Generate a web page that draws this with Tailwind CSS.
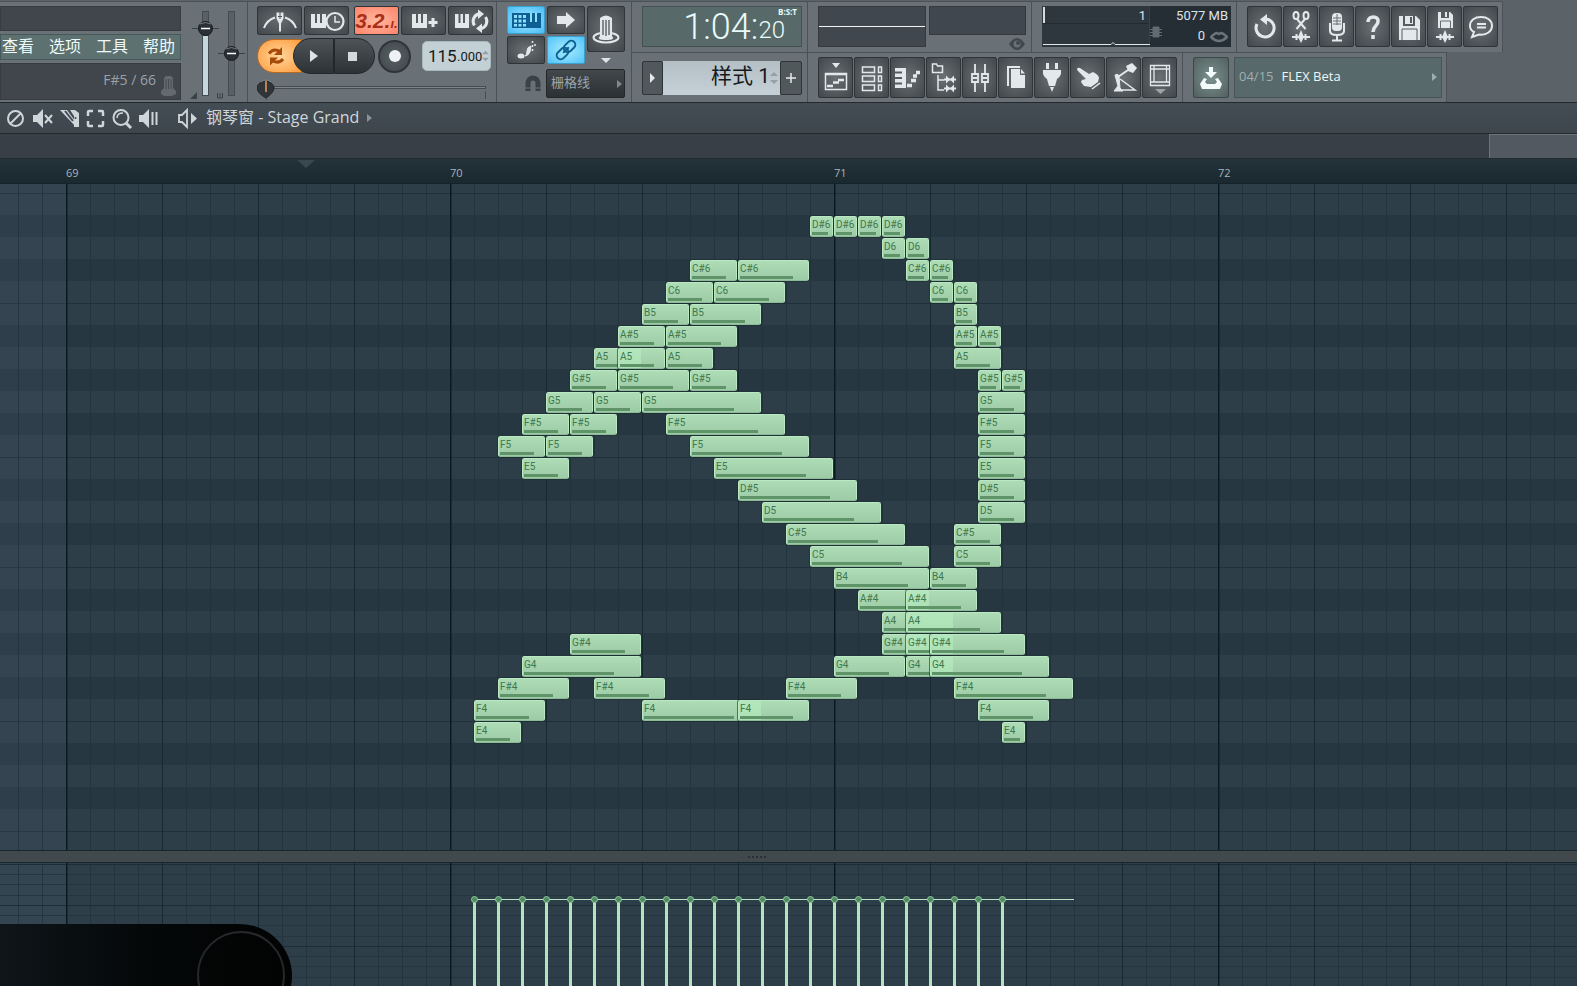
<!DOCTYPE html>
<html lang="zh-CN">
<head>
<meta charset="utf-8">
<title>钢琴窗 - Stage Grand</title>
<script src="https://cdn.jsdelivr.net/npm/@tailwindcss/browser@4"></script>
</head>
<body class="flex h-screen flex-col overflow-hidden bg-[#2d3e49] font-['Open_Sans','Noto_Sans_CJK_SC',sans-serif] text-[#dfe6e9]">

<header class="flex h-[103px] shrink-0 border-b border-[#23292e] bg-[#5b6268] pt-px [&_button]:shrink-0">

  <!-- menu and hint -->
  <section class="flex w-[248px] shrink-0 border-t border-r border-[#4a5157] bg-[#697177]">
    <div class="flex w-[181px] flex-col gap-[3px] pt-1">
      <div class="h-[25px] border border-[#363c42] bg-[#40464c]"></div>
      <nav class="flex h-[26px] items-center gap-[15px] border border-[#46595a] bg-[#5c7170] pb-[3px] pl-px text-[16px] leading-5 whitespace-nowrap text-[#eefafa]">
        <a href="#">查看</a><a href="#">选项</a><a href="#">工具</a><a href="#">帮助</a>
      </nav>
      <div class="flex h-[37px] items-center justify-end gap-1 border border-[#363c42] bg-[#40464c] pr-[3px] text-[14px] text-[#9ba2a7]">
        <span class="pb-1">F#5 / 66</span>
        <svg class="mt-2 h-5 w-[17px]" viewBox="0 0 17 20" fill="#62696f"><path d="M4 2l2-2h5l2 2v10l3 3v3l-4 2H4l-3-2v-3l3-3z"/><path d="M6 3v10M8.500 3v10M11 3v10" stroke="#444b51" fill="none"/></svg>
      </div>
    </div>
    <div class="relative flex flex-1">
      <svg class="h-[99px] w-[66px]" viewBox="181 2 66 99">
        <g fill="#596066" stroke="#444b51"><rect x="202.500" y="11.500" width="6" height="84"/><rect x="228.500" y="11.500" width="6" height="84"/></g>
        <rect x="203" y="36" width="5" height="59" fill="#c6d6dd"/>
        <path d="M192 28.500h27M218 53.500h27" stroke="#3b4146"/>
        <g fill="#2a3035" stroke="#171b1e"><circle cx="205.500" cy="28.500" r="7"/><circle cx="231.500" cy="53.500" r="7"/></g>
        <path d="M200 24q5-3 11 0M226 49q5-3 11 0" stroke="#737b80" fill="none"/>
        <path d="M201 28.500h9M227 53.500h9" stroke="#fff" stroke-width="1.500"/>
        <path d="M190 99h7v-7z" fill="#3b4146"/><path d="M217.500 93v5h5v-5M220 93v5" stroke="#3b4146" fill="none"/>
      </svg>
      <input type="range" aria-label="主音量" class="absolute top-2 left-4 h-20 w-4 opacity-0">
      <input type="range" aria-label="主音高" class="absolute top-2 left-11 h-20 w-4 opacity-0">
    </div>
  </section>

  <!-- transport -->
  <section class="flex w-[249px] shrink-0 flex-col border-t border-r border-[#4a5157] bg-[#697177] pt-1 pl-[9px]">
    <div class="flex h-[29px] gap-[2px] [&>button]:flex [&>button]:w-[45px] [&>button]:items-center [&>button]:justify-center [&>button]:rounded-[2px] [&>button]:border [&>button]:border-[#2e3438] [&_svg]:h-[26px] [&_svg]:w-[40px]">
      <button aria-label="节拍器" class="bg-radial from-[#656c70] to-[#41474b]"><svg viewBox="0 0 40 26" fill="none" stroke="#e3e9eb" stroke-width="2"><path d="M4 20Q7 12 15 9.500M25 9.500Q33 12 36 20"/><path d="M16.500 4.500h7v6l-2.500 5v8h-2v-8l-2.500-5z" fill="#e3e9eb" stroke="none"/><path d="M20 3v8M18 8.500h4" stroke="#4e5559" stroke-width="1"/></svg></button>
      <button aria-label="等待输入" class="bg-radial from-[#656c70] to-[#41474b]"><svg viewBox="0 0 40 26"><path d="M4 6h15v14H4z" fill="#e3e9eb"/><path d="M9 6v9M14 6v9" stroke="#555c60" stroke-width="2"/><circle cx="28" cy="13.500" r="8.500" fill="#5a6165" stroke="#e3e9eb" stroke-width="2.200"/><path d="M28 8v6h5" fill="none" stroke="#e3e9eb" stroke-width="1.500"/></svg></button>
      <button aria-label="倒计时" class="ml-[3px] bg-radial from-[#ffb9a2] to-[#ff8268] font-['Liberation_Mono',monospace] leading-none font-bold text-[#ab2f17] italic"><span class="flex items-baseline font-['Liberation_Sans',sans-serif] text-[21px]">3.2.<span class="text-[13px]">ı.</span></span></button>
      <button aria-label="叠加录制" class="bg-radial from-[#656c70] to-[#41474b]"><svg viewBox="0 0 40 26"><path d="M8 6h15v14H8z" fill="#e3e9eb"/><path d="M13 6v9M18 6v9" stroke="#555c60" stroke-width="2"/><path d="M29 10v9M24.500 14.500h9" stroke="#e3e9eb" stroke-width="3"/></svg></button>
      <button aria-label="循环录制" class="bg-radial from-[#656c70] to-[#41474b]"><svg viewBox="0 0 40 26"><path d="M4 6h14v14H4z" fill="#e3e9eb"/><path d="M8.500 6v9M13 6v9" stroke="#555c60" stroke-width="2"/><path d="M23.500 17.500a7.500 7.500 0 0 1 4-11.500M34.500 9a7.500 7.500 0 0 1-4 11.500" fill="none" stroke="#e3e9eb" stroke-width="3"/><path d="M27 1.500l6 4.500-6 5zM31 15.500l-6 5 6 4.500z" fill="#e3e9eb"/></svg></button>
    </div>
    <div class="mt-[3px] flex h-9 items-center">
      <button aria-label="样式/歌曲" class="flex h-[34px] w-[45px] items-center justify-center rounded-l-full border border-[#b56a24] bg-radial from-[#ffd79a] to-[#ff9a35] pr-2"><svg class="h-6 w-6" viewBox="0 0 24 24" fill="none" stroke="#a64a0c" stroke-width="3"><path d="M5 9.500q4-5.500 10-2.500M19 15q-4 5-10 2"/><path d="M18 3v8h-8zM6 21.500v-8h8z" fill="#a64a0c" stroke="none"/></svg></button>
      <button aria-label="播放" class="-ml-[9px] flex h-9 w-[41px] items-center justify-center rounded-l-full border border-[#22272a] bg-linear-to-b from-[#4d5458] to-[#2d3236]"><svg class="h-3 w-2" viewBox="0 0 8 12"><path d="M0 0l8 6-8 6z" fill="#dfe3e6"/></svg></button>
      <button aria-label="停止" class="flex h-9 w-[41px] items-center justify-center rounded-r-full border border-[#22272a] bg-linear-to-b from-[#4d5458] to-[#2d3236] pr-1"><span class="size-[9px] bg-[#d5d9dc]"></span></button>
      <button aria-label="录制" class="ml-[3px] flex size-[33px] items-center justify-center rounded-full border-2 border-[#2e3438] bg-radial from-[#5a6165] to-[#3f464a]"><span class="size-[12px] rounded-full bg-[#eef2f4]"></span></button>
      <label class="ml-[11px] flex h-[30px] w-[69px] items-center rounded-[5px] border border-[#a9b8be] bg-[#c3d1d7] pl-[5px] font-['Roboto',sans-serif] text-[#16191b]">
        <input aria-label="速度" value="115" class="w-[29px] bg-transparent text-[17px] leading-6 outline-none"><span class="pt-px text-[13px] leading-5">.000</span>
        <svg class="h-4 w-[7px] shrink-0" viewBox="0 0 8 16" fill="#93a0a6"><path d="M0 6l4-4 4 4zM0 10h8l-4 4z"/></svg>
      </label>
    </div>
    <div class="relative mt-[3px] h-6">
      <svg class="h-6 w-[235px]" viewBox="0 0 235 24"><rect x="8.500" y="9.500" width="220" height="2" fill="#7d858b" stroke="#464d53"/><path d="M228.500 14v8M9.500 16v7" stroke="#464d53"/><path d="M9 21c-5-3-9-6-9-11a9 8.500 0 0 1 17 0c0 5-4 8-8 11z" fill="#303539" stroke="#202427"/><path d="M4 5q5-4 10 0" stroke="#7b8287" fill="none"/><path d="M9 4v11" stroke="#f09a62" stroke-width="1.500"/></svg>
      <input type="range" aria-label="歌曲位置" value="0" class="absolute inset-0 w-[235px] opacity-0">
    </div>
  </section>

  <!-- editing switches -->
  <section class="flex w-[135px] shrink-0 flex-col border-t border-r border-[#4a5157] bg-[#697177] pt-1 pl-[10px]">
    <div class="flex gap-[2px]">
      <div class="grid grid-cols-2 gap-[2px] [&>button]:flex [&>button]:h-[28px] [&>button]:w-[38px] [&>button]:items-center [&>button]:justify-center [&>button]:rounded-[2px] [&>button]:border [&_svg]:h-6 [&_svg]:w-8">
        <button aria-label="键盘输入" class="border-[#3aa0d0] bg-radial from-[#9fe6ff] to-[#45bdf5]"><svg viewBox="0 0 32 24"><path d="M2 5h29v15H2z" fill="#0f5f94"/><path d="M4 7h3v3H4zM8.500 7h3v3h-3zM13 7h3v3h-3zM4 11.500h3v3H4zM8.500 11.500h3v3h-3zM13 11.500h3v3h-3zM4 16h3v2.500H4zM8.500 16h3v2.500h-3zM13 16h3v2.500h-3zM20 5h2v9h-2zM25 5h2v9h-2z" fill="#8ee0ff"/></svg></button>
        <button aria-label="步进" class="border-[#2e3438] bg-radial from-[#6a7175] to-[#41474b]"><svg viewBox="0 0 32 24"><path d="M7 8h9V4l9 8-9 8v-4H7z" fill="#e3e9eb"/></svg></button>
        <button aria-label="滑音" class="border-[#2e3438] bg-radial from-[#6a7175] to-[#41474b]"><svg viewBox="0 0 32 24"><ellipse cx="11" cy="18" rx="3.500" ry="2.500" fill="#e3e9eb"/><path d="M15 18q2-1 2-5 0-4 4-5l-1 6q-2 4-5 4z" fill="#e3e9eb" stroke="#e3e9eb"/><path d="M22.500 3v12M24 7h3" stroke="#e3e9eb" stroke-dasharray="2 2" stroke-width="1.500"/></svg></button>
        <button aria-label="链接" class="border-[#3aa0d0] bg-radial from-[#a8ecff] to-[#4cc3f8]"><svg viewBox="0 0 32 24" fill="none" stroke="#0f6292" stroke-width="2"><g transform="rotate(-45 16 12)"><rect x="4.500" y="8" width="13" height="8" rx="4"/><rect x="14.500" y="8" width="13" height="8" rx="4"/><path d="M12 12h8"/></g></svg></button>
      </div>
      <div class="flex flex-col items-center">
        <button aria-label="多重链接控制" class="flex h-[46px] w-[38px] items-center justify-center rounded-[2px] border border-[#2e3438] bg-radial from-[#6a7175] to-[#41474b]"><svg class="h-8 w-8" viewBox="0 0 32 32"><ellipse cx="16" cy="24.500" rx="12.500" ry="5" fill="none" stroke="#e3e9eb" stroke-width="2"/><path d="M10 5q6-5 12 0v18q4 4-6 4t-6-4z" fill="#e3e9eb"/><path d="M13 7v15M16 7v16M19 7v15" stroke="#62696d" stroke-width="1.500"/></svg></button>
        <svg class="mt-[6px] h-[5px] w-[10px]" viewBox="0 0 10 5"><path d="M0 0h10L5 5z" fill="#dfe4e7"/></svg>
      </div>
    </div>
    <div class="mt-[5px] flex h-[29px] items-center justify-end pr-[6px]">
      <svg class="mr-[5px] h-[18px] w-4" viewBox="0 0 16 18"><path d="M3 16V8a5 5 0 0 1 10 0v8" stroke="#3b4247" stroke-width="5" fill="none"/><path d="M0 13h16" stroke="#697177"/></svg>
      <label class="flex h-[29px] w-[79px] items-center rounded-[2px] border border-[#22272a] bg-linear-to-b from-[#42484c] to-[#2c3134] pb-[3px] pl-1">
        <select aria-label="吸附" class="w-[66px] appearance-none bg-transparent text-[13px] leading-5 text-[#9da5aa] outline-none"><option>栅格线</option></select>
        <svg class="mt-[3px] h-2 w-[5px]" viewBox="0 0 5 8"><path d="M0 0l5 4-5 4z" fill="#80888d"/></svg>
      </label>
    </div>
  </section>

  <div class="flex min-w-0 flex-col">
    <div class="flex h-[51px] [&>section]:h-[51px] [&>section]:shrink-0 [&>section]:border-t [&>section]:border-r [&>section]:border-[#4a5157] [&>section]:bg-[#697177] [&>section]:pt-1 [&>section]:pl-[10px]">
      <section class="w-[176px]">
        <div class="relative flex h-[41px] w-[160px] items-center justify-end border border-[#43504f] bg-[#576a69] pr-4 font-['Roboto',sans-serif] leading-none font-light text-[#e9fafa]">
          <span class="text-[36px]">1:04:</span><span class="pt-[6px] text-[24px]">20</span>
          <span class="absolute top-0 right-1 font-['Open_Sans',sans-serif] text-[8px] leading-[10px] font-bold">B:S:T</span>
        </div>
      </section>
      <section class="flex w-[224px] gap-[3px]">
        <div class="flex h-[41px] w-[108px] items-center border border-[#33393f] bg-[#41474e]"><div class="h-px w-full bg-[#eef4f7]"></div></div>
        <div class="flex flex-col items-end">
          <div class="h-[29px] w-[97px] border border-[#33393f] bg-[#41474e]"></div>
          <svg class="mt-[3px] mr-px h-3 w-4" viewBox="0 0 16 12"><path d="M0 6q8-12 16 0q-8 12-16 0z" fill="#41484d"/><circle cx="8" cy="6" r="3.500" fill="#697177"/><circle cx="9" cy="5" r="2" fill="#41484d"/></svg>
        </div>
      </section>
      <section class="w-[205px]">
        <div class="grid h-[41px] w-[189px] grid-cols-[108px_1fr] bg-[#252d35] font-['Roboto',sans-serif] text-[13px] leading-5 text-[#dde4e8]">
          <div class="relative border-r border-[#39414a] bg-[#2e363e]">
            <div class="flex h-[18px] justify-between border-b border-[#232a31] pr-[3px] pl-px"><span class="mt-px h-4 w-[2px] bg-[#d5dce0]"></span><span>1</span></div>
            <svg class="h-[22px] w-[108px]" viewBox="0 0 108 22"><path d="M1 20.500h68l2-2 2 2h35" stroke="#dfe8ec" fill="none"/></svg>
          </div>
          <div class="flex flex-col items-end pr-[3px]">
            <span class="h-5">5077 MB</span>
            <span class="flex w-full gap-[5px]"><svg class="h-3 w-3" viewBox="0 0 12 12" stroke="#606a72"><path d="M0 3.500h12M0 6.500h12M0 9.500h12"/><path d="M3 1h6v10H3z" fill="#606a72"/></svg><span class="ml-auto">0</span><svg class="mt-[5px] h-3 w-[18px]" viewBox="0 0 18 12"><path d="M1 6q4-4 6-4l2 1 2-1q2 0 6 4q-8 8-16 0z" fill="none" stroke="#6a737a" stroke-width="2.500"/></svg></span>
          </div>
        </div>
      </section>
      <section class="flex w-[266px] gap-px [&>button]:flex [&>button]:h-[41px] [&>button]:w-[35px] [&>button]:items-center [&>button]:justify-center [&>button]:rounded-[2px] [&>button]:border [&>button]:border-[#2e3438] [&>button]:bg-radial [&>button]:from-[#6a7175] [&>button]:to-[#41474b] [&_svg]:h-8 [&_svg]:w-7">
        <button aria-label="撤销"><svg viewBox="0 0 28 32"><path d="M15 8a9 9 0 1 1-9 5" fill="none" stroke="#e3e9eb" stroke-width="3"/><path d="M16 3v11l-7-5.500z" fill="#e3e9eb"/></svg></button>
        <button aria-label="剪切"><svg viewBox="0 0 28 32" fill="none" stroke="#e3e9eb" stroke-width="2"><ellipse cx="9" cy="4.500" rx="2.500" ry="3.500"/><ellipse cx="19" cy="4.500" rx="2.500" ry="3.500"/><path d="M10 8l8.500 10M18 8L9.500 18"/><path d="M5 26h18M9.500 23v6M18.500 23v6"/><path d="M14 19l3 7-3 6-3-6z" fill="#e3e9eb" stroke="none"/></svg></button>
        <button aria-label="录音"><svg viewBox="0 0 28 32"><rect x="9" y="2" width="10" height="18" rx="4" fill="#e3e9eb"/><path d="M10 7h8M10 10h8M10 13h8M14 3v11" stroke="#666d71"/><path d="M7 12v8q0 4 7 4t7-4v-8M14 24v5M9 29.500h10" fill="none" stroke="#e3e9eb" stroke-width="2"/></svg></button>
        <button aria-label="帮助"><svg viewBox="0 0 28 32" fill="none" stroke="#e3e9eb" stroke-width="3.500"><path d="M9 11c0-7 11-6.500 10-.5 0 4.500-5 4.500-5 10.500"/><path d="M14 24v4"/></svg></button>
        <button aria-label="保存"><svg viewBox="0 0 28 32"><path d="M4 5h17l4 4v20H4z" fill="#e3e9eb"/><path d="M8 5h12v10H8z" fill="#555c60"/><path d="M10 5h8v8h-8z" fill="#e3e9eb"/><path d="M15 6h2v6h-2z" fill="#555c60"/><path d="M7 29V18h15v11" fill="none" stroke="#555c60"/></svg></button>
        <button aria-label="渲染"><svg viewBox="0 0 28 32"><path d="M7 1h12l3 3v13H7z" fill="#e3e9eb"/><path d="M10 1h8v6h-8z" fill="#555c60"/><path d="M14 1h2v5h-2z" fill="#e3e9eb"/><path d="M9.500 17v-7h10v7" fill="none" stroke="#666d71"/><path d="M5 26h18M9.500 23v6M18.500 23v6" stroke="#e3e9eb" stroke-width="2"/><path d="M14 19l3 7-3 6-3-6z" fill="#e3e9eb"/></svg></button>
        <button aria-label="聊天"><svg viewBox="0 0 28 32" fill="none" stroke="#e3e9eb" stroke-width="2"><path d="M7 21l-2 5 7-2.500c8 1 13-3.500 13-8.500 0-6-5-9-11-9S3 9 3 15c0 3 2 5 4 6z"/><path d="M10 13h9M10 16.500h9"/></svg></button>
      </section>
    </div>
    <div class="flex h-[50px] [&>section]:h-[50px] [&>section]:shrink-0 [&>section]:border-t [&>section]:border-r [&>section]:border-[#4a5157] [&>section]:bg-[#697177] [&>section]:pt-1 [&>section]:pl-[10px]">
      <section class="w-[176px]">
        <div class="mt-1 flex h-[34px] w-[160px]">
          <button aria-label="样式菜单" class="flex w-[21px] items-center justify-center rounded-[2px] border border-[#2e3438] bg-[#51585c]"><svg class="h-[10px] w-[5px]" viewBox="0 0 5 10"><path d="M0 0l5 5-5 5z" fill="#e3e9eb"/></svg></button>
          <label class="flex flex-1 items-center bg-linear-to-b from-[#b4c0c6] to-[#c6d1d7] pr-[2px]"><input aria-label="样式" value="样式 1" class="mb-1 w-full min-w-0 bg-transparent text-right font-['Roboto','Noto_Sans_CJK_SC',sans-serif] text-[21px] leading-7 text-[#15191c] outline-none"><svg class="h-4 w-2 shrink-0" viewBox="0 0 8 16" fill="#93a0a6"><path d="M0 6l4-4 4 4zM0 10h8l-4 4z"/></svg></label>
          <button aria-label="添加样式" class="flex w-[22px] items-center justify-center rounded-[2px] border border-[#2e3438] bg-[#51585c]"><svg class="size-[10px]" viewBox="0 0 10 10"><path d="M5 0v10M0 5h10" stroke="#e3e9eb" stroke-width="1.500"/></svg></button>
        </div>
      </section>
      <section class="flex w-[375px] gap-px [&>button]:flex [&>button]:h-[41px] [&>button]:w-[35px] [&>button]:items-center [&>button]:justify-center [&>button]:rounded-[2px] [&>button]:border [&>button]:border-[#2e3438] [&>button]:bg-radial [&>button]:from-[#6a7175] [&>button]:to-[#41474b] [&_svg]:h-8 [&_svg]:w-7">
        <button aria-label="播放列表"><svg viewBox="0 0 28 32"><path d="M10 1h8l-4 5z" fill="#e3e9eb"/><path d="M3.500 11.500h21v16h-21zM3 12.500h22" fill="none" stroke="#e3e9eb" stroke-width="1.500"/><path d="M5 24h6M11 20.500h6M16 18h6" stroke="#e3e9eb" stroke-width="2.500"/></svg></button>
        <button aria-label="通道机架"><svg viewBox="0 0 28 32" fill="none" stroke="#e3e9eb" stroke-width="1.500"><path d="M4.500 5h12v5.500h-12zM4.500 14h12v5.500h-12zM4.500 23h12v5.500h-12zM20.500 5h3v5.500h-3zM20.500 14h3v5.500h-3zM20.500 23h3v5.500h-3z"/></svg></button>
        <button aria-label="钢琴窗"><svg viewBox="0 0 28 32"><path d="M1 6h11v20H1z" fill="#e3e9eb"/><path d="M1 10.500h7M1 16h7M1 21.500h7" stroke="#555c60" stroke-width="2"/><path d="M13 23.500h5M17 18.500h5M19 14h4M22 10.500h4" stroke="#e3e9eb" stroke-width="3.500"/></svg></button>
        <button aria-label="浏览器"><svg viewBox="0 0 28 32" fill="none" stroke="#e3e9eb" stroke-width="1.500"><path d="M2.500 2h4l1 2h5v6.500h-10zM8 13v15h6M8 18h6"/><path d="M14 17.500h12M14 26.500h12" stroke-width="2"/><path d="M16 13.500l4 4-4 4zM24 13.500l-4 4 4 4zM16 22.500l4 4-4 4zM24 22.500l-4 4 4 4z" fill="#e3e9eb" stroke="none"/></svg></button>
        <button aria-label="混音台"><svg viewBox="0 0 28 32" fill="none" stroke="#e3e9eb" stroke-width="1.800"><path d="M9 2v9M9 21v9M19 2v9M19 21v9M6 12h6v8H6zM16 12h6v8h-6zM7 16h4M17 16h4"/></svg></button>
        <button aria-label="复制"><svg viewBox="0 0 28 32"><path d="M6 24V5h12" fill="none" stroke="#e3e9eb" stroke-width="2"/><path d="M9 7h9v6h5v13H9zM19 7l4 4.500h-4z" fill="#e3e9eb"/></svg></button>
        <button aria-label="插件"><svg viewBox="0 0 28 32" fill="#e3e9eb"><path d="M8 1h3v6H8zM17 1h3v6h-3zM5 8h18v4q-1 3-4 5l-2 7h-6l-2-7q-3-2-4-5z"/><path d="M12 25h4l-2 5z"/></svg></button>
        <button aria-label="触摸"><svg viewBox="0 0 28 32"><path d="M3 7q1-2 3-1l9 6 4-2q6 3 6 6l-1 4-7 5-7-1-3-4 1-2 4-1-8-8q-1-1-1-2z" fill="#e3e9eb"/><path d="M18 27l8-6" stroke="#e3e9eb" stroke-width="1.500"/></svg></button>
        <button aria-label="工具"><svg viewBox="0 0 28 32"><path d="M16 4l6-3 5 5-4 5-5-2z" fill="#e3e9eb"/><path d="M18 8L8 15" stroke="#e3e9eb" stroke-width="2"/><path d="M5 13q3-2 4 1l1 12 3 3H4l4-5z" fill="#e3e9eb" stroke="#e3e9eb"/><path d="M10 17l15 11H8" fill="none" stroke="#e3e9eb" stroke-width="1.500"/></svg></button>
        <button aria-label="面板"><svg viewBox="0 0 28 32"><path d="M4.500 3.500h19v20h-19zM4 7h20M8 4v16M20.500 4v16M5 20h19" fill="none" stroke="#e3e9eb" stroke-width="1.300"/><path d="M9 27h11l-5.500 5z" fill="#9da4a8"/></svg></button>
      </section>
      <section class="flex w-[264px] gap-[5px]">
        <button aria-label="下载" class="flex h-[41px] w-[36px] items-center justify-center rounded-[2px] border border-[#39484a] bg-radial from-[#7b9290] to-[#52605f]"><svg class="h-8 w-7" viewBox="0 0 28 32" fill="#f2fafa"><path d="M12 5h4v5h4l-6 6-6-6h4z"/><path d="M7 16l-4 6 2 5h18l2-5-4-6-3 1 2 3-2 2h-8l-2-2 2-3z"/></svg></button>
        <button class="flex h-[41px] w-[208px] items-center border border-[#455555] bg-[#57696a] px-1 pb-[2px] text-[13px] text-[#eef8f8]"><span class="mr-2 text-[#9fb0b0]">04/15</span>FLEX Beta<svg class="ml-auto h-2 w-[5px]" viewBox="0 0 5 8"><path d="M0 0l5 4-5 4z" fill="#9fadad"/></svg></button>
      </section>
    </div>
  </div>
</header>

<!-- piano roll title bar -->
<div class="flex h-[30px] shrink-0 items-center bg-linear-to-b from-[#434d54] to-[#3f464d] pl-[6px] text-[#cfd6da]">
  <svg class="h-6 w-[195px]" viewBox="6 106 195 24" fill="none" stroke="#cfd6da" stroke-width="2">
    <circle cx="15.500" cy="118.500" r="7.500"/><path d="M10 124l11-11"/>
    <path d="M33 115h4l6-6v19l-6-6h-4z" fill="#cfd6da" stroke="none"/><path d="M45 115l7 8M52 115l-7 8"/>
    <path d="M60 110h7l9 12v5zM70 110h5l4 3v14h-5v-11z" fill="#cfd6da" stroke="none"/><path d="M65 111l8 10" stroke="#434b52"/><circle cx="75.500" cy="118" r="1" fill="#434b52" stroke="none"/>
    <path d="M88 116v-4q0-1 1-1h4M98 111h4q1 0 1 1v4M103 121v4q0 1-1 1h-4M93 126h-4q-1 0-1-1v-4" stroke-width="2.500"/>
    <circle cx="121" cy="117.500" r="7.500"/><path d="M126 123l5 5" stroke-width="3"/><path d="M117 118q0-5 6-5" stroke-width="1.500"/>
    <path d="M139 115h4l6-6v19l-6-6h-4z" fill="#cfd6da" stroke="none"/><path d="M152.500 112v13M156.500 112v13"/>
    <path d="M179 115h3l5-5v17l-5-5h-3z" stroke-width="1.800"/><path d="M191 113l6 5.500-6 5.500z" fill="#cfd6da" stroke="none"/>
  </svg>
  <h1 class="ml-[5px] pb-[2px] text-[16px] leading-6 whitespace-nowrap">钢琴窗 - Stage Grand</h1>
  <svg class="ml-2 h-2 w-[5px]" viewBox="0 0 5 8"><path d="M0 0l5 4-5 4z" fill="#8b9398"/></svg>
</div>

<!-- overview scrollbar -->
<div class="flex h-[26px] shrink-0 justify-end border-y border-[#24292e] bg-[#383f46]">
  <div class="w-[88px] border-t border-l border-[#6d747a] bg-[#535960]"></div>
</div>

<!-- bar ruler -->
<div class="relative h-[25px] shrink-0 border-b border-[#15232b] bg-linear-to-b from-[#24323a] to-[#1a2930] text-[11px] leading-7 text-[#a9b4ba]" id="ruler">
  <svg class="absolute top-px left-[297px] h-2 w-[18px]" viewBox="0 0 18 8"><path d="M0 0h18L9 8z" fill="#3a4750"/></svg>
</div>

<main class="relative h-[666px] shrink-0 overflow-hidden" id="roll">
  <svg class="absolute inset-0 h-full w-full">
    <defs>
      <pattern id="keys" width="8" height="264" y="119" patternUnits="userSpaceOnUse">
        <path fill="#2e3e49" d="M0 0h8v264H0z"/>
        <path fill="#273742" d="M0 22h8v22H0zM0 66h8v22H0zM0 110h8v22H0zM0 176h8v22H0zM0 220h8v22H0z"/>
        <path fill="#20303a" d="M0 0h8v1H0zM0 154h8v1H0z"/>
      </pattern>
      <pattern id="bars" width="384" height="8" x="66" patternUnits="userSpaceOnUse">
        <path fill="#22323c" fill-opacity=".8" d="M24 0h1v8h-1zM48 0h1v8h-1zM72 0h1v8h-1zM120 0h1v8h-1zM144 0h1v8h-1zM168 0h1v8h-1zM216 0h1v8h-1zM240 0h1v8h-1zM264 0h1v8h-1zM312 0h1v8h-1zM336 0h1v8h-1zM360 0h1v8h-1z"/>
        <path fill="#182831" d="M96 0h1v8h-1zM192 0h1v8h-1zM288 0h1v8h-1z"/>
        <path fill="#0c1920" d="M0 0h1v8H0z"/><path fill="#0c1920" fill-opacity=".5" d="M1 0h1v8H1z"/>
      </pattern>
      <pattern id="levels" width="8" height="41" y="42" patternUnits="userSpaceOnUse">
        <path fill="#1d2d36" d="M0 0h8v1H0z"/><path fill="#263640" d="M0 10h8v1H0zM0 20h8v1H0zM0 31h8v1H0z"/>
      </pattern>
    </defs>
    <rect width="100%" height="100%" fill="url(#keys)"/>
    <rect width="66" height="100%" fill="#5f7d8c" fill-opacity=".12"/>
    <rect width="100%" height="100%" fill="url(#bars)"/>
  </svg>
</main>

<div class="flex h-[13px] shrink-0 items-center justify-center border-y border-[#18262e] bg-[#42494c] pr-16"><span class="h-[2px] w-[18px] border-t-2 border-dotted border-[#2a3033]"></span></div>

<section class="relative min-h-0 flex-1 overflow-hidden">
  <svg class="absolute inset-0 h-full w-full">
    <rect width="100%" height="100%" fill="#2d3e49"/>
    <rect width="66" height="100%" fill="#5f7d8c" fill-opacity=".12"/>
    <rect width="100%" height="100%" fill="url(#levels)"/>
    <rect width="100%" height="100%" fill="url(#bars)"/>
    <path d="M474 36.500h600" stroke="#b9e3c4"/>
    <g id="stems"></g>
  </svg>
  <div class="absolute top-[61px] left-0 h-[104px] w-[292px] rounded-r-full bg-linear-to-r from-[#0f1519] via-[#050809] to-[#020303]">
    <div class="absolute top-[7px] right-[7px] size-[88px] rounded-full border-2 border-[#25292b]"></div>
  </div>
</section>

<script>
const BAR = 384, STEP = 24, ROW = 22, ORIGIN = 450;
const names = ['D#6','D6','C#6','C6','B5','A#5','A5','G#5','G5','F#5','F5','E5','D#5','D5','C#5','C5','B4','A#4','A4','G#4','G4','F#4','F4','E4'];
// [start, end] in steps from bar 70, one list per pitch
const notes = [
  [[15,16],[16,17],[17,18],[18,19]],
  [[18,19],[19,20]],
  [[10,12],[12,15],[19,20],[20,21]],
  [[9,11],[11,14],[20,21],[21,22]],
  [[8,10],[10,13],[21,22]],
  [[7,9],[9,12],[21,22],[22,23]],
  [[6,8],[7,9],[9,11],[21,23]],
  [[5,7],[7,10],[10,12],[22,23],[23,24]],
  [[4,6],[6,8],[8,13],[22,24]],
  [[3,5],[5,7],[9,14],[22,24]],
  [[2,4],[4,6],[10,15],[22,24]],
  [[3,5],[11,16],[22,24]],
  [[12,17],[22,24]],
  [[13,18],[22,24]],
  [[14,19],[21,23]],
  [[15,20],[21,23]],
  [[16,20],[20,22]],
  [[17,20],[19,22]],
  [[18,21],[19,23]],
  [[5,8],[18,20],[19,21],[20,24]],
  [[3,8],[16,19],[19,21],[20,25]],
  [[2,5],[6,9],[14,17],[21,26]],
  [[1,4],[8,13],[12,15],[22,25]],
  [[1,3],[23,24]]
];
const roll = document.getElementById('roll');
notes.forEach((row, r) => row.forEach(([a, b], i) => {
  const n = document.createElement('div');
  n.className = "absolute h-[21px] overflow-hidden rounded-[2px] border border-[#b9e8c3] border-b-[#8dba98] bg-linear-to-b from-[#addcb5] to-[#9ccba6] pl-px font-['Roboto',sans-serif] text-[10px] leading-4 text-[#41784e] outline outline-[#1c2f30]/60";
  const w = (b - a) * STEP;
  n.style.left = ORIGIN + a * STEP + 'px';
  n.style.top = 32 + r * ROW + 'px';
  n.style.width = w - 1 + 'px';
  const prev = row[i - 1];
  if (prev && prev[1] > a) {
    const o = document.createElement('div');
    o.className = 'absolute inset-y-0 left-0 bg-[#b8eec0]/60';
    o.style.width = (prev[1] - a) * STEP - 2 + 'px';
    n.append(o);
  }
  const t = document.createElement('span');
  t.className = 'relative';
  t.textContent = names[r];
  const v = document.createElement('div');
  v.className = 'absolute bottom-px left-px h-[3px] bg-[#5f9468]';
  v.style.width = Math.round((w - 4) * 0.78) + 'px';
  n.append(t, v);
  roll.append(n);
}));
const ruler = document.getElementById('ruler');
[69, 70, 71, 72].forEach((bar, i) => {
  const s = document.createElement('span');
  s.className = 'absolute top-0';
  s.style.left = 66 + i * BAR + 'px';
  s.textContent = bar;
  ruler.append(s);
});
let stems = '';
for (let k = 1; k <= 23; k++) {
  const x = ORIGIN + k * STEP + 0.5;
  stems += `<path d="M${x} 37v400" stroke="#b4e2bf" stroke-width="3"/><circle cx="${x}" cy="36.500" r="3" fill="#4f8a60" stroke="#8fc79d"/>`;
}
document.getElementById('stems').innerHTML = stems;
</script>
</body>
</html>
